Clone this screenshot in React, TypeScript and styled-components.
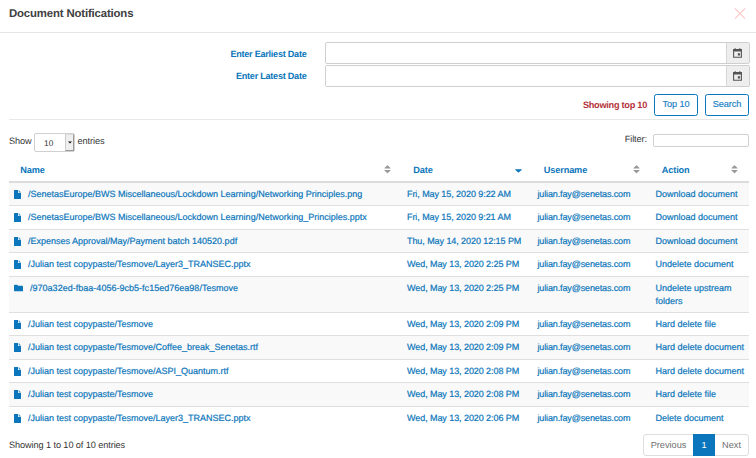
import React from 'react';
import styled, { createGlobalStyle } from 'styled-components';

const blue = '#0b76bb';
const rule = '#dfdfdf';

const GlobalStyle = createGlobalStyle`
  *, *::before, *::after { box-sizing: border-box; }
  body {
    margin: 0;
    background: #fff;
    color: #333;
    font: 9px/13px "Liberation Sans", Arial, sans-serif;
    text-rendering: geometricPrecision;
  }
  svg { display: block; }
`;

const Dialog = styled.main`
  width: 756px;
  height: 458px;
  overflow: hidden;
`;

const TitleBar = styled.header`
  display: flex;
  justify-content: space-between;
  height: 33px;
  padding: 7px 10px 0 9px;
  border-bottom: 1px solid #e4e4e4;
`;

const Title = styled.h1`
  margin: 0;
  font-size: 11.4px;
  line-height: 15px;
  font-weight: 700;
  letter-spacing: -0.16px;
  color: #404040;
`;

const CloseButton = styled.button`
  width: 12px;
  height: 13px;
  padding: 0;
  border: 0;
  background: none;
`;

const Content = styled.div`
  padding: 0 7px 0 9px;
`;

const SearchForm = styled.form`
  height: 87px;
  padding-top: 9px;
  border-bottom: 1px solid #e8e8e8;
`;

const DateRow = styled.div`
  display: grid;
  grid-template-columns: 297.5px 425px;
  column-gap: 18.5px;
  align-items: center;
  height: 22px;
  margin-bottom: 0.5px;
`;

const DateLabel = styled.label`
  padding-top: 2px;
  color: ${blue};
  font-size: 9.1px;
  font-weight: 700;
  letter-spacing: -0.25px;
  text-align: right;
`;

const DateField = styled.div`
  display: flex;
  height: 22px;
  border: 1px solid #cfcfcf;
  border-radius: 2px;
  overflow: hidden;
`;

const DateInput = styled.input`
  flex: 1;
  min-width: 0;
  padding: 0 6px;
  border: 0;
  background: #fff;
  outline: 0;
`;

const CalendarButton = styled.button`
  display: flex;
  align-items: center;
  justify-content: center;
  width: 23px;
  padding: 0 1px 0 0;
  border: 0;
  border-left: 1px solid #d6d6d6;
  background: #eee;
`;

const FormActions = styled.div`
  display: flex;
  justify-content: flex-end;
  align-items: center;
  gap: 7px;
  margin-top: 7px;
`;

const Notice = styled.strong`
  padding-top: 1px;
  color: #b3323b;
  font-size: 9.2px;
  letter-spacing: -0.27px;
`;

const OutlineButton = styled.button`
  height: 22px;
  padding: 0;
  width: 44px;
  border: 1px solid ${blue};
  border-radius: 2.5px;
  background: #fff;
  color: #1580c4;
  font: inherit;
  font-size: 9.2px;
  letter-spacing: -0.08px;
  -webkit-text-stroke: 0.15px #1580c4;
`;

const TableControls = styled.div`
  display: flex;
  justify-content: space-between;
  height: 39px;
  padding-top: 12px;
  font-size: 9.2px;
  letter-spacing: -0.1px;
`;

const LengthControl = styled.div`
  display: flex;
  align-items: center;
  gap: 2.5px;
  height: 18px;
`;

const LengthSelect = styled.div`
  display: flex;
  width: 41px;
  height: 19px;
  margin-top: 3px;
  border: 1px solid #d0d0d0;
  border-radius: 2px;
  font-size: 8.4px;
  line-height: 18px;
`;

const LengthValue = styled.span`
  flex: 1;
  padding-left: 9px;
`;

const LengthArrow = styled.span`
  display: flex;
  align-items: center;
  justify-content: center;
  width: 9px;
  border: 1px solid #9a9a9a;
  border-top-color: #ddd;
  border-left-color: #ccc;
  background: #efefef;
`;

const FilterControl = styled.label`
  display: flex;
  gap: 6px;
  height: 14px;
  padding-top: 1px;
`;

const FilterInput = styled.input`
  width: 96px;
  height: 13px;
  margin-top: 1px;
  padding: 0 4px;
  border: 1px solid #d0d0d0;
  border-radius: 2px;
  background: #fff;
`;

const Table = styled.div`
  color: ${blue};
  font-size: 9px;
`;

const columns = '393px 130.5px 118px 98.5px';

const HeaderRow = styled.div`
  display: grid;
  grid-template-columns: ${columns};
  height: 23.5px;
  border-bottom: 2px solid #dcdcdc;
`;

const HeaderCell = styled.div`
  display: flex;
  justify-content: space-between;
  padding: 5px 11px 0 11.2px;
  font-size: 9.2px;
  font-weight: 700;
  letter-spacing: -0.12px;

  svg { margin-top: 1px; }
`;

const Row = styled.div<{ $odd: boolean; $tall: boolean }>`
  display: grid;
  grid-template-columns: ${columns};
  height: ${p => (p.$tall ? 36 : 23.5)}px;
  border-bottom: 1px solid ${rule};
  background: ${p => (p.$odd ? '#f9f9f9' : '#fff')};

  &:last-child { border-bottom-color: transparent; }
`;

const Cell = styled.div<{ $tracking?: number }>`
  padding: 5px 5px 0;
  white-space: pre;
  letter-spacing: ${p => p.$tracking ?? 0}px;
  -webkit-text-stroke: 0.2px ${blue};
`;

const NameCell = styled(Cell)`
  display: flex;
  gap: 7px;

  svg { margin-top: 2px; }
`;

const Footer = styled.footer`
  display: flex;
  justify-content: space-between;
  padding-top: 4px;
  font-size: 9.2px;
  letter-spacing: -0.1px;
`;

const Summary = styled.span`
  padding-top: 5px;
`;

const Pager = styled.nav`
  display: flex;
  height: 22px;
  border: 1px solid #dedede;
  border-radius: 3px;
`;

const PageButton = styled.button<{ $active?: boolean; $width: number }>`
  width: ${p => p.$width}px;
  margin: ${p => (p.$active ? '-1px 0' : '0')};
  padding: 1px 0 0;
  border: 0;
  background: ${p => (p.$active ? blue : 'transparent')};
  color: ${p => (p.$active ? '#fff' : '#707070')};
  font: inherit;
`;

const CloseIcon = () => (
  <svg width="12" height="13" viewBox="0 0 12 13">
    <path d="M1 1.5 11 11.7M11 1.5 1 11.7" stroke="#fbcaca" strokeWidth="1.1" fill="none" />
  </svg>
);

const CalendarIcon = () => (
  <svg width="9" height="10" viewBox="0 0 9 10">
    <path d="M.6 1.6h7.8v7.6H.6z" fill="none" stroke="#555" strokeWidth="1.1" />
    <path d="M.5 1.5h8v1.9h-8zM1.6.3h1.2v1.5H1.6zM6.2.3h1.2v1.5H6.2zM4.8 5.3h2.3v2.3H4.8z" fill="#555" />
  </svg>
);

const FileIcon = () => (
  <svg width="7" height="9" viewBox="0 0 7 9">
    <path d="M0 .5Q0 0 .5 0H4v3h3v5.5q0 .5-.5.5h-6Q0 9 0 8.5z" fill={blue} />
    <path d="M4.7 0 7 2.4H4.7z" fill={blue} opacity=".8" />
  </svg>
);

const FolderIcon = () => (
  <svg width="9" height="9" viewBox="0 0 9 9">
    <path d="M0 1.7Q0 .8.9.8h2.3l1 1h3.9q.9 0 .9.9v3.7q0 .9-.9.9H.9Q0 7.3 0 6.4z" fill={blue} />
  </svg>
);

const SortIcon = ({ sorted }: { sorted?: boolean }) => (
  <svg width="7" height="9" viewBox="0 0 7 9">
    {sorted ? (
      <path d="M.4 4.2h6.2q.4.2 0 .7L4 7.2q-.5.4-1 0L.4 4.9Q0 4.4.4 4.2z" fill={blue} />
    ) : (
      <path
        d="M.5 3.5h6q.4-.2 0-.6L3.9.4q-.4-.4-.8 0L.5 2.9q-.4.4 0 .6zM.5 5h6q.4.2 0 .6L3.9 8.1q-.4.4-.8 0L.5 5.6q-.4-.4 0-.6z"
        fill="#999"
      />
    )}
  </svg>
);

const headers = [
  { label: 'Name' },
  { label: 'Date', sorted: true },
  { label: 'Username' },
  { label: 'Action' },
];

const entries = [
  ['/SenetasEurope/BWS Miscellaneous/Lockdown Learning/Networking Principles.png', 'Fri, May 15, 2020 9:22 AM', 'Download document'],
  ['/SenetasEurope/BWS Miscellaneous/Lockdown Learning/Networking_Principles.pptx', 'Fri, May 15, 2020 9:21 AM', 'Download document'],
  ['/Expenses Approval/May/Payment batch 140520.pdf', 'Thu, May 14, 2020 12:15 PM', 'Download document'],
  ['/Julian test copypaste/Tesmove/Layer3_TRANSEC.pptx', 'Wed, May 13, 2020 2:25 PM', 'Undelete document'],
  ['/970a32ed-fbaa-4056-9cb5-fc15ed76ea98/Tesmove', 'Wed, May 13, 2020 2:25 PM', 'Undelete upstream\nfolders'],
  ['/Julian test copypaste/Tesmove', 'Wed, May 13, 2020 2:09 PM', 'Hard delete file'],
  ['/Julian test copypaste/Tesmove/Coffee_break_Senetas.rtf', 'Wed, May 13, 2020 2:09 PM', 'Hard delete document'],
  ['/Julian test copypaste/Tesmove/ASPI_Quantum.rtf', 'Wed, May 13, 2020 2:08 PM', 'Hard delete document'],
  ['/Julian test copypaste/Tesmove', 'Wed, May 13, 2020 2:08 PM', 'Hard delete file'],
  ['/Julian test copypaste/Tesmove/Layer3_TRANSEC.pptx', 'Wed, May 13, 2020 2:06 PM', 'Delete document'],
];

const DateFilter = ({ id, label }: { id: string; label: string }) => (
  <DateRow>
    <DateLabel htmlFor={id}>{label}</DateLabel>
    <DateField>
      <DateInput id={id} />
      <CalendarButton type="button"><CalendarIcon /></CalendarButton>
    </DateField>
  </DateRow>
);

export default function App() {
  return (
    <Dialog>
      <GlobalStyle />
      <TitleBar>
        <Title>Document Notifications</Title>
        <CloseButton><CloseIcon /></CloseButton>
      </TitleBar>
      <Content>
        <SearchForm>
          <DateFilter id="earliest" label="Enter Earliest Date" />
          <DateFilter id="latest" label="Enter Latest Date" />
          <FormActions>
            <Notice>Showing top 10</Notice>
            <OutlineButton type="button">Top 10</OutlineButton>
            <OutlineButton type="button">Search</OutlineButton>
          </FormActions>
        </SearchForm>
        <TableControls>
          <LengthControl>
            <span>Show</span>
            <LengthSelect>
              <LengthValue>10</LengthValue>
              <LengthArrow>
                <svg width="4" height="3" viewBox="0 0 4 3"><path d="M0 .4h4L2 2.6z" fill="#111" /></svg>
              </LengthArrow>
            </LengthSelect>
            <span>entries</span>
          </LengthControl>
          <FilterControl>
            <span>Filter:</span>
            <FilterInput />
          </FilterControl>
        </TableControls>
        <Table>
          <HeaderRow>
            {headers.map(h => (
              <HeaderCell key={h.label}>
                {h.label}
                <SortIcon sorted={h.sorted} />
              </HeaderCell>
            ))}
          </HeaderRow>
          {entries.map(([name, date, action], i) => {
            const folder = action.startsWith('Undelete upstream');
            return (
              <Row key={i} $odd={i % 2 === 0} $tall={folder}>
                <NameCell $tracking={folder ? 0.02 : 0}>
                  {folder ? <FolderIcon /> : <FileIcon />}
                  <span>{name}</span>
                </NameCell>
                <Cell $tracking={-0.07}>{date}</Cell>
                <Cell $tracking={-0.13}>julian.fay@senetas.com</Cell>
                <Cell>{action}</Cell>
              </Row>
            );
          })}
        </Table>
        <Footer>
          <Summary>Showing 1 to 10 of 10 entries</Summary>
          <Pager>
            <PageButton $width={49}>Previous</PageButton>
            <PageButton $width={22} $active>1</PageButton>
            <PageButton $width={33}>Next</PageButton>
          </Pager>
        </Footer>
      </Content>
    </Dialog>
  );
}
